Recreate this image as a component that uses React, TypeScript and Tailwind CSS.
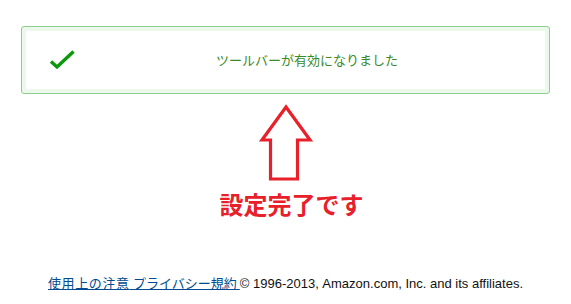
export default function App() {
  return (
    <div
      className="w-[571px] h-[304px] bg-white flex flex-col items-center overflow-hidden"
      style={{ fontFamily: '"Liberation Sans", Arial, "Noto Sans CJK JP", sans-serif' }}
    >
      {/* success box */}
      <div className="self-start ml-[21px] mt-[26px] w-[529px] h-[68px] border border-[#8bd08b] rounded-[3px] p-[4px] bg-[#edf8ed]">
        <div className="h-full bg-white flex items-center">
          <svg width="28" height="22" viewBox="0 0 28 22" className="ml-[22px]">
            <path d="M3 12.5 L9 18 L25.5 2.5" fill="none" stroke="#0a990a" strokeWidth="3.4" />
          </svg>
          <div
            className="ml-[140px] text-[13px] text-[#3a8a26]"
            style={{ fontFamily: '"Noto Sans CJK JP", sans-serif' }}
          >
            ツールバーが有効になりました
          </div>
        </div>
      </div>

      {/* arrow */}
      <svg width="56" height="78" viewBox="0 0 56 78" className="mt-[10px]">
        <path
          d="M28 3 L52 36 L39.5 36 L39.5 75 L12.5 75 L12.5 36 L4 36 Z"
          fill="none"
          stroke="#e8202a"
          strokeWidth="3.2"
          strokeLinejoin="miter"
        />
      </svg>

      <div
        className="mt-[10px] ml-[12px] text-[24px] font-bold leading-none text-[#e8202a]"
        style={{ fontFamily: '"Noto Sans CJK JP", sans-serif' }}
      >
        設定完了です
      </div>

      {/* footer */}
      <div className="mt-auto mb-[14px] text-[13px] leading-none text-[#111]">
        <a
          href="#"
          className="underline text-[#004b91] tracking-[0.6px]"
          style={{ fontFamily: '"Noto Sans CJK JP", sans-serif' }}
        >
          使用上の注意{" "}
        </a>
        <a
          href="#"
          className="underline text-[#004b91]"
          style={{ fontFamily: '"Noto Sans CJK JP", sans-serif' }}
        >
          プライバシー規約{" "}
        </a>
        {" "}© 1996-2013, Amazon.com, Inc. and its affiliates.
      </div>
    </div>
  );
}
